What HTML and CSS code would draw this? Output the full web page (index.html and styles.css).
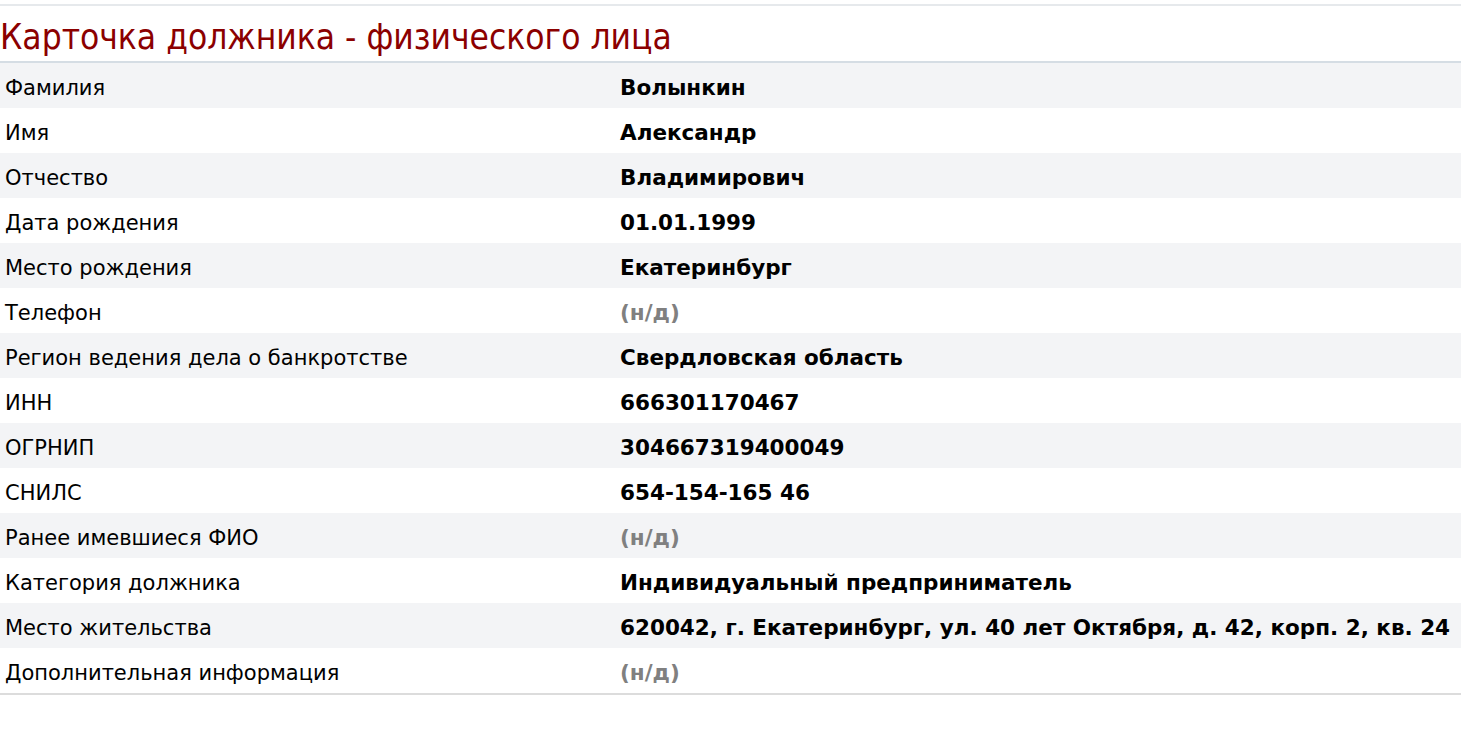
FILE: index.html
```html
<!DOCTYPE html>
<html lang="ru">
<head>
<meta charset="utf-8">
<title>Карточка должника</title>
<link rel="stylesheet" href="styles.css">
</head>
<body>
<div class="card">
  <h1 class="card-title">Карточка должника - физического лица</h1>
  <table class="info">
    <tbody>
      <tr><td class="lbl">Фамилия</td><td class="val">Волынкин</td></tr>
      <tr><td class="lbl">Имя</td><td class="val">Александр</td></tr>
      <tr><td class="lbl">Отчество</td><td class="val">Владимирович</td></tr>
      <tr><td class="lbl">Дата рождения</td><td class="val">01.01.1999</td></tr>
      <tr><td class="lbl">Место рождения</td><td class="val">Екатеринбург</td></tr>
      <tr><td class="lbl">Телефон</td><td class="val na">(н/д)</td></tr>
      <tr><td class="lbl">Регион ведения дела о банкротстве</td><td class="val">Свердловская область</td></tr>
      <tr><td class="lbl">ИНН</td><td class="val">666301170467</td></tr>
      <tr><td class="lbl">ОГРНИП</td><td class="val">304667319400049</td></tr>
      <tr><td class="lbl">СНИЛС</td><td class="val">654-154-165 46</td></tr>
      <tr><td class="lbl">Ранее имевшиеся ФИО</td><td class="val na">(н/д)</td></tr>
      <tr><td class="lbl">Категория должника</td><td class="val">Индивидуальный предприниматель</td></tr>
      <tr><td class="lbl">Место жительства</td><td class="val">620042, г. Екатеринбург, ул. 40 лет Октября, д. 42, корп. 2, кв. 24</td></tr>
      <tr><td class="lbl">Дополнительная информация</td><td class="val na">(н/д)</td></tr>
    </tbody>
  </table>
</div>
</body>
</html>
```
FILE: styles.css
```css
html, body {
  margin: 0;
  padding: 0;
  background: #ffffff;
}
body {
  font-family: "DejaVu Sans", sans-serif;
  color: #000;
}
.card {
  margin-top: 4px;
  border-top: 2px solid #e6e9ec;
}
.card-title {
  margin: 0;
  height: 57px;
  box-sizing: border-box;
  padding-top: 11px;
  font-family: "DejaVu Sans Condensed", "DejaVu Sans", sans-serif;
  font-weight: normal;
  font-size: 35px;
  line-height: 40px;
  color: #8b0000;
  border-bottom: 2px solid #d5dde4;
}
.info {
  width: 100%;
  border-collapse: collapse;
  border-bottom: 2px solid #dcdcdc;
}
.info td {
  height: 41px;
  padding: 4px 0 0 0;
  vertical-align: middle;
}
.info tr:nth-child(odd) td {
  background: #f3f4f6;
}
.lbl {
  width: 603px;
  padding-left: 5px !important;
  font-size: 21px;
}
.val {
  padding-left: 12px !important;
  font-size: 21.5px;
  font-weight: bold;
}
.val.na {
  color: #808080;
}
```
